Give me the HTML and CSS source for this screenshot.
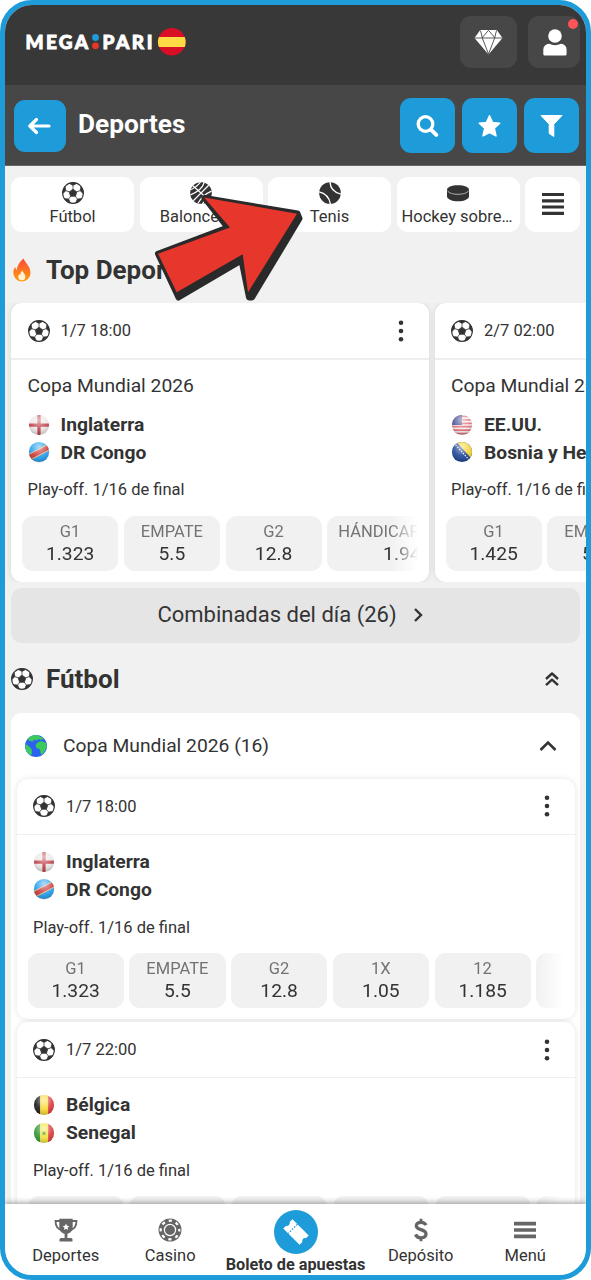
FILE: index.html
```html
<!DOCTYPE html>
<html lang="es">
<head>
<meta charset="utf-8">
<title>Deportes</title>
<link rel="stylesheet" href="styles.css">
</head>
<body>
<svg class="defs" width="0" height="0">
  <defs>
    <radialGradient id="gloss" cx=".5" cy=".25" r=".8"><stop offset="0" stop-color="#fff" stop-opacity=".65"/><stop offset=".55" stop-color="#fff" stop-opacity=".15"/><stop offset="1" stop-color="#000" stop-opacity=".25"/></radialGradient>
    <linearGradient id="fire" x1="0" y1="0" x2="0" y2="1"><stop offset="0" stop-color="#fb4a35"/><stop offset="1" stop-color="#ff9f0d"/></linearGradient>
    <clipPath id="disc"><circle cx="12" cy="12" r="11"/></clipPath>
  </defs>
  <symbol id="ball" viewBox="0 0 24 24">
    <circle cx="12" cy="12" r="11.3" fill="#fff" stroke="#333" stroke-width="1.2"/>
    <g fill="#333" stroke="#333" stroke-width=".8" stroke-linejoin="round">
      <path id="patch" d="M8 1.5 12 3.800 16 1.500Q12 .3 8 1.500zM12 4V8"/>
      <use href="#patch" transform="rotate(72 12 12)"/><use href="#patch" transform="rotate(144 12 12)"/>
      <use href="#patch" transform="rotate(216 12 12)"/><use href="#patch" transform="rotate(288 12 12)"/>
      <path d="M12 7.800 16.200 10.800 14.600 15.600H9.400L7.800 10.800z"/>
    </g>
  </symbol>
  <symbol id="dots" viewBox="0 0 6 24"><g fill="#333"><circle cx="3" cy="3.8" r="2.3"/><circle cx="3" cy="12" r="2.3"/><circle cx="3" cy="20.2" r="2.3"/></g></symbol>
  <symbol id="england" viewBox="0 0 24 24"><g clip-path="url(#disc)"><path fill="#ece6e6" d="M0 0h24v24H0z"/><path fill="#bd3a42" d="M10.200 0h3.600v24h-3.600zM0 10.300h24v3.600H0z"/></g><circle cx="12" cy="12" r="11" fill="url(#gloss)"/></symbol>
  <symbol id="congo" viewBox="0 0 24 24"><g clip-path="url(#disc)"><path fill="#1597ec" d="M0 0h24v24H0z"/><path stroke="#d8b58b" stroke-width="7.200" d="M-2 19.500 26 5"/><path stroke="#c72d2c" stroke-width="5" d="M-2 19.500 26 5"/></g><circle cx="12" cy="12" r="11.500" fill="url(#gloss)"/></symbol>
  <symbol id="usa" viewBox="0 0 24 24"><g clip-path="url(#disc)"><path fill="#f7e9e9" d="M0 0h24v24H0z"/><path stroke="#dc6570" stroke-width="1.900" d="M0 2.500h24M0 6.300h24M0 10.100h24M0 13.900h24M0 17.700h24M0 21.500h24"/><path fill="#414b92" d="M0 0h12v12H0z"/></g><circle cx="12" cy="12" r="11" fill="url(#gloss)"/></symbol>
  <symbol id="bosnia" viewBox="0 0 24 24"><g clip-path="url(#disc)"><path fill="#143c91" d="M0 0h24v24H0z"/><path fill="#f6cf22" d="M5 0h19v21z"/><path stroke="#fff" stroke-width="1.400" stroke-dasharray="1.500 1.500" d="m3 2 18 20"/></g><circle cx="12" cy="12" r="11" fill="url(#gloss)"/></symbol>
  <symbol id="belgium" viewBox="0 0 24 24"><g clip-path="url(#disc)"><path fill="#111" d="M0 0h8v24H0z"/><path fill="#fbd526" d="M8 0h8.500v24H8z"/><path fill="#d92f2b" d="M16.500 0H24v24h-7.500z"/></g><circle cx="12" cy="12" r="11" fill="url(#gloss)"/></symbol>
  <symbol id="senegal" viewBox="0 0 24 24"><g clip-path="url(#disc)"><path fill="#2a9426" d="M0 0h8v24H0z"/><path fill="#f4e130" d="M8 0h8.500v24H8z"/><path fill="#d92f2b" d="M16.500 0H24v24h-7.500z"/><path fill="#5a8f20" d="m12 9.500.8 1.700 1.900.2-1.400 1.300.4 1.900-1.700-.9-1.700.9.4-1.900-1.400-1.300 1.900-.2z"/></g><circle cx="12" cy="12" r="11" fill="url(#gloss)"/></symbol>
</svg>

<div class="app">
  <header class="brandbar">
    <svg class="logo" width="162" height="30" viewBox="0 0 162 30">
      <g class="logo-text"><text x="0.500" y="21.500" textLength="62.500">MEGA</text><text x="77.500" y="21.500" textLength="50">PARI</text></g>
      <circle cx="70.500" cy="10.500" r="3.400" fill="#1d9cd9"/><circle cx="70.500" cy="18.800" r="3.400" fill="#e6362c"/>
      <g transform="translate(133 1)"><circle cx="13.800" cy="13.800" r="13.800" fill="#d80e27"/><path fill="#ffda44" d="M.9 9A13.800 13.800 0 0 0 .9 19H26.700A13.800 13.800 0 0 0 26.700 9z"/></g>
    </svg>
    <div class="tile vip"><svg width="29" height="26" viewBox="0 0 29 26"><path fill="#fff" d="M6.200 1h16.600L28.500 9 14.500 25.500.5 9z"/><path fill="none" stroke="#474747" stroke-width=".9" d="M.5 9h28M14.500 1.300 8.200 8.700 14.500 25 20.800 8.700zM6.500 1.500 8.300 8.700M22.500 1.500 20.700 8.700"/></svg></div>
    <div class="tile user"><svg width="24" height="27" viewBox="0 0 24 27"><circle cx="12" cy="7" r="6.800" fill="#fff"/><path fill="#fff" d="M.3 25V20.500A5.700 5.700 0 0 1 6 14.800Q12 17.500 18 14.800A5.700 5.700 0 0 1 23.600 20.500V25a1.500 1.500 0 0 1-1.500 1.500H1.800A1.500 1.500 0 0 1 .3 25z"/></svg><i class="badge"></i></div>
  </header>

  <div class="titlebar">
    <div class="btn back"><svg width="24" height="18" viewBox="0 0 24 18"><path fill="none" stroke="#fff" stroke-width="3.200" stroke-linecap="round" stroke-linejoin="round" d="M8.500 2.500 1.800 9l6.700 6.500M2.500 9H21"/></svg></div>
    <h1>Deportes</h1>
    <div class="btn"><svg width="24" height="24" viewBox="0 0 24 24"><circle cx="9.500" cy="10" r="7.300" fill="none" stroke="#fff" stroke-width="3.300"/><path stroke="#fff" stroke-width="4" stroke-linecap="round" d="m15.300 15.800 5 5"/></svg></div>
    <div class="btn"><svg width="24" height="24" viewBox="0 0 24 24"><path fill="#fff" stroke="#fff" stroke-width="1.500" stroke-linejoin="round" d="m11.500 1.800 3 6.600 7.200.8-5.400 4.900 1.700 7.800-6.500-3.400L5 21.900l1.700-7.800L1.300 9.200l7.200-.8z"/></svg></div>
    <div class="btn"><svg width="24" height="24" viewBox="0 0 24 24"><path fill="#fff" stroke="#fff" stroke-width="1" stroke-linejoin="round" d="M1 1.500h21l-8.200 8.700v12.300l-4.600-3V10.200z"/></svg></div>
  </div>

  <main class="content">
    <nav class="sports">
      <div class="sport"><svg width="22" height="22"><use href="#ball"/></svg><span>Fútbol</span></div>
      <div class="sport"><svg width="22" height="22" viewBox="0 0 24 24"><circle cx="12" cy="12" r="11.800" fill="#333"/><path fill="none" stroke="#fff" stroke-width="1.300" d="M2.800 3.800 21.200 20.200M20.400 3.500 3.600 20.500M11.500 0Q7 6 .5 8.500M15.500.5Q13 9 .5 14M23.500 10Q14 14 8.500 23.500M23.500 15.500Q17 18 13.500 24"/></svg><span>Baloncesto</span></div>
      <div class="sport"><svg width="22" height="22" viewBox="0 0 24 24"><circle cx="12" cy="12" r="11.800" fill="#333"/><path fill="none" stroke="#fff" stroke-width="1.500" d="M12 0Q12.500 10.500 24 13.300M0 10.700Q10.500 13 12.500 24"/></svg><span>Tenis</span></div>
      <div class="sport"><svg width="22" height="22" viewBox="0 0 24 24"><path fill="#333" d="M0 8.500C0 5.500 5 3.500 12 3.500S24 5.500 24 8.500v7c0 3-5 5.500-12 5.500S0 18.500 0 15.500z"/><path fill="none" stroke="#ddd" stroke-width=".8" d="M.3 9.300C2 12 6 13.400 12 13.400S22 12 23.700 9.300"/></svg><span>Hockey sobre hielo</span></div>
      <div class="sport list"><svg width="22" height="24" viewBox="0 0 22 24"><path stroke="#333" stroke-width="3.200" d="M0 2.500h22M0 8.800h22M0 15h22M0 21.300h22"/></svg></div>
    </nav>

    <h2 class="top"><svg width="22" height="24" viewBox="0 0 22 24"><path fill="url(#fire)" d="M12.500.5C13.500 4 19.500 8 19.500 14.500A8.500 8.500 0 0 1 11 23.500 8.800 8.800 0 0 1 2.300 14.800C2.300 12.500 3 10.500 4.300 9c.2 1.600.7 2.600 1.600 3.100C6 7.500 9.500 3 12.500.5z"/><path fill="#fff3d6" d="M11.300 12.500c.7 2.200 3 3.600 3 6.300a3.500 3.500 0 0 1-7 0c0-1.300.4-2.200 1-2.900.2.700.5 1 1 1.200.1-1.800.8-3.500 2-4.600z"/></svg>Top Deportes</h2>

    <section class="carousel">
      <article class="card">
        <div class="card-head"><svg class="ball"><use href="#ball"/></svg><time>1/7 18:00</time><svg class="more"><use href="#dots"/></svg></div>
        <p class="league">Copa Mundial 2026</p>
        <div class="teams">
          <div><svg><use href="#england"/></svg>Inglaterra</div>
          <div><svg><use href="#congo"/></svg>DR Congo</div>
        </div>
        <p class="stage">Play-off. 1/16 de final</p>
        <div class="odds">
          <div class="odd"><span>G1</span><b>1.323</b></div><div class="odd"><span>EMPATE</span><b>5.5</b></div><div class="odd"><span>G2</span><b>12.8</b></div><div class="odd wide"><span>HÁNDICAP 1 (-1.5)</span><b>1.944</b></div>
        </div>
      </article>
      <article class="card">
        <div class="card-head"><svg class="ball"><use href="#ball"/></svg><time>2/7 02:00</time><svg class="more"><use href="#dots"/></svg></div>
        <p class="league">Copa Mundial 2026</p>
        <div class="teams">
          <div><svg><use href="#usa"/></svg>EE.UU.</div>
          <div><svg><use href="#bosnia"/></svg>Bosnia y Herzegovina</div>
        </div>
        <p class="stage">Play-off. 1/16 de final</p>
        <div class="odds">
          <div class="odd"><span>G1</span><b>1.425</b></div><div class="odd"><span>EMPATE</span><b>5.1</b></div>
        </div>
      </article>
    </section>

    <div class="combo">Combinadas del día (26)<svg width="10" height="16" viewBox="0 0 10 16"><path fill="none" stroke="#333" stroke-width="2.400" d="m2 2 6 6-6 6"/></svg></div>

    <h2 class="football"><svg width="22" height="22"><use href="#ball"/></svg>Fútbol<svg class="collapse" width="14" height="16" viewBox="0 0 14 16"><path fill="none" stroke="#333" stroke-width="2.400" stroke-linejoin="round" d="M1 8 7 2.500 13 8M1 14.200 7 8.700l6 5.500"/></svg></h2>

    <section class="group">
      <div class="group-head">
        <svg width="22" height="22" viewBox="0 0 22 22"><circle cx="11" cy="11" r="11" fill="#2b62ee"/><path fill="#3bcb5a" d="M2.800 3.800Q7-.3 12 .1L19 3.500 16 5 13.500 4 12 5.500 9 4.500 8 6.500 4.500 6zM.4 9 3 10.500 6.500 14 7 17.500 6 20.500Q-.5 17 .4 9zM12.500 7.500 16.500 6l4.500 2 .8 4-2.800 5.500-3 2.500-1-5.500-3.500-1.500-1-3z"/></svg>
        <span>Copa Mundial 2026 (16)</span>
        <svg width="18" height="12" viewBox="0 0 18 12"><path fill="none" stroke="#333" stroke-width="2.500" d="M1.500 10 9 2.500l7.500 7.500"/></svg>
      </div>
      <article class="card event">
        <div class="card-head"><svg class="ball"><use href="#ball"/></svg><time>1/7 18:00</time><svg class="more"><use href="#dots"/></svg></div>
        <div class="teams">
          <div><svg><use href="#england"/></svg>Inglaterra</div>
          <div><svg><use href="#congo"/></svg>DR Congo</div>
        </div>
        <p class="stage">Play-off. 1/16 de final</p>
        <div class="odds">
          <div class="odd"><span>G1</span><b>1.323</b></div><div class="odd"><span>EMPATE</span><b>5.5</b></div><div class="odd"><span>G2</span><b>12.8</b></div><div class="odd"><span>1X</span><b>1.05</b></div><div class="odd"><span>12</span><b>1.185</b></div><div class="odd"></div>
        </div>
      </article>
      <article class="card event">
        <div class="card-head"><svg class="ball"><use href="#ball"/></svg><time>1/7 22:00</time><svg class="more"><use href="#dots"/></svg></div>
        <div class="teams">
          <div><svg><use href="#belgium"/></svg>Bélgica</div>
          <div><svg><use href="#senegal"/></svg>Senegal</div>
        </div>
        <p class="stage">Play-off. 1/16 de final</p>
        <div class="odds">
          <div class="odd"></div><div class="odd"></div><div class="odd"></div><div class="odd"></div><div class="odd"></div><div class="odd"></div>
        </div>
      </article>
    </section>
  </main>

  <footer class="tabbar">
    <div class="tab"><svg width="24" height="24" viewBox="0 0 24 24"><path fill="none" stroke="#666" stroke-width="1.800" d="M6 3H1.500C1.500 8 3 11 8 12M18 3h4.500C22.500 8 21 11 16 12"/><path fill="#666" d="M5.300.8h13.400V9c0 4-2.400 6-5.300 6.800V20H17a1.500 1.500 0 0 1 1.500 1.500V23.500h-13V21.500A1.500 1.500 0 0 1 7 20h3.600v-4.200C7.700 15 5.300 13 5.300 9z"/><path fill="#fff" d="m12 5.500 1 2.200 2.400.3-1.800 1.600.5 2.400-2.100-1.200L9.900 12l.5-2.400L8.600 8l2.400-.3z"/></svg><span>Deportes</span></div>
    <div class="tab"><svg width="24" height="24" viewBox="0 0 24 24"><circle cx="12" cy="12" r="11.500" fill="#666"/><circle cx="12" cy="12" r="9.300" fill="none" stroke="#fff" stroke-width="2.200" stroke-dasharray="3.200 4.104" stroke-dashoffset="1.600"/><circle cx="12" cy="12" r="5.600" fill="none" stroke="#fff" stroke-width="1.200"/></svg><span>Casino</span></div>
    <div class="tab main-tab"><i><svg width="30" height="30" viewBox="0 0 30 30"><g transform="rotate(45 15 15)"><path fill="#fff" d="M3.500 8.500h23v4a2.700 2.700 0 0 0 0 5v4h-23v-4a2.700 2.700 0 0 0 0-5z"/><path stroke="#1d9cd9" stroke-width="1.200" stroke-dasharray="1.700 1.300" d="M10.500 8.500v13"/></g></svg></i><span>Boleto de apuestas</span></div>
    <div class="tab"><svg width="24" height="24" viewBox="0 0 24 24"><path fill="none" stroke="#666" stroke-width="3.300" d="M17 7.200Q15.700 4.300 12 4.300C8.900 4.300 7.300 5.800 7.300 7.800 7.300 12.700 17 10.600 17 16c0 2.400-2 3.800-5 3.800q-4.200 0-5.400-3.400"/><path stroke="#666" stroke-width="2.800" d="M12 .7v3.800M12 19.500v3.800"/></svg><span>Depósito</span></div>
    <div class="tab"><svg width="22" height="24" viewBox="0 0 22 24"><path stroke="#666" stroke-width="3.700" d="M0 5.700h22M0 12h22M0 18.300h22"/></svg><span>Menú</span></div>
  </footer>

  <svg class="pointer" width="160" height="120" viewBox="150 190 160 120"><path fill="#2a2a2a" stroke="#2a2a2a" stroke-width="6" stroke-linejoin="round" d="M204.500 198 297.500 213.500 299.500 218.500 252 297.500H249L241.500 260.500 178.500 297.500 158 253.700 227.500 227.500z"/><path fill="#e7372d" d="M204 197.500 297 213.700 248 292.300 242.700 254.300 176.700 292.300 158 253.700 230 227.500z"/></svg>
</div>
</body>
</html>
```

FILE: styles.css
```css
* { box-sizing: border-box; margin: 0; padding: 0; }
body { background: #fff; font-family: Roboto, "Liberation Sans", sans-serif; color: #333; }
svg { display: block; flex: none; }
.defs { position: absolute; }

.app {
  position: relative;
  display: flex;
  flex-direction: column;
  width: 591px;
  height: 1280px;
  border: 5px solid #1d9cd9;
  border-radius: 32px;
  background: #f1f1f1;
  overflow: hidden;
}

.brandbar { flex: none; display: flex; align-items: flex-start; height: 80px; padding: 11px 6px 0 20px; background: #383838; }
.logo { margin: 11px auto 0 0; }
.logo-text { font: 900 19px Lato, sans-serif; fill: #fff; stroke: #fff; stroke-width: .9; }
.tile { position: relative; display: flex; align-items: center; justify-content: center; height: 52px; border-radius: 11px; background: #474747; }
.vip { width: 57px; margin-right: 11px; }
.user { width: 52px; }
.user svg { margin-left: 1px; }
.badge { position: absolute; top: 2.500px; right: 2.500px; width: 10px; height: 10px; border-radius: 50%; background: #ff5558; }

.titlebar { flex: none; display: flex; align-items: center; gap: 7px; height: 81px; padding: 1px 7px 0 9px; background: #474747; border-bottom: 1px solid #6a6566; }
.titlebar h1 { flex: 1; padding-left: 5px; font-size: 26.200px; font-weight: 700; line-height: 30px; color: #fff; margin-top: -4px; }
.btn { display: flex; align-items: center; justify-content: center; width: 55px; height: 55px; border-radius: 11px; background: #1d9cd9; }
.back { width: 52px; height: 52px; }

.content { flex: 1; min-height: 0; overflow: hidden; padding: 11px 0 0 6px; }
.sports { display: flex; gap: 5.500px; padding-right: 6px; }
.sport { flex: 1; min-width: 0; height: 55px; padding: 5px 5px 0; border-radius: 11px; background: #fff; font-size: 16.500px; text-align: center; }
.sport svg { margin: 0 auto; }
.sport span { display: block; padding-top: 1px; line-height: 23px; overflow: hidden; text-overflow: ellipsis; white-space: nowrap; }
.sport.list { flex: 0 0 55px; padding-top: 15px; }

h2 { display: flex; align-items: center; font-size: 26px; font-weight: 700; line-height: 30px; }
h2.top { height: 71px; gap: 13px; padding-top: 4px; }
h2.football { height: 70.500px; gap: 13px; padding: 2px 27px 0 0; }
.collapse { margin-left: auto; }

.carousel { display: flex; gap: 5.500px; height: 279px; margin-left: -6px; padding-left: 6px; overflow: hidden; }
.card { flex: 0 0 418px; height: 279px; border-radius: 11px; background: #fff; box-shadow: 0 0 6px rgba(0, 0, 0, .11); overflow: hidden; }
.card-head { display: flex; align-items: center; height: 57px; padding: 0 25px 0 16.500px; border-bottom: 2px solid #eee; font-size: 16.500px; }
.ball { width: 22px; height: 22px; margin-right: 11px; }
.more { width: 6px; height: 24px; margin-left: auto; }
.league { margin: 12px 0 11.500px 16.500px; font-size: 19.250px; line-height: 27.500px; white-space: nowrap; }
.teams { padding-left: 16.500px; font-size: 19.250px; font-weight: 700; line-height: 27.500px; white-space: nowrap; }
.teams div { display: flex; align-items: center; height: 27.500px; gap: 11px; }
.teams svg { width: 22px; height: 22px; }
.stage { margin: 13px 0 15px 16.500px; font-size: 16.500px; line-height: 22px; white-space: nowrap; }
.odds { display: flex; gap: 5.500px; margin: 0 11px; overflow: hidden; -webkit-mask-image: linear-gradient(to left, transparent, #000 28px); mask-image: linear-gradient(to left, transparent, #000 28px); }
.odd { flex: 0 0 96.250px; height: 55px; padding-top: 5px; border-radius: 11px; background: #f1f1f1; text-align: center; }
.odd span { display: block; font-size: 16.500px; line-height: 21px; color: #737373; }
.odd b { display: block; font-size: 19.250px; line-height: 24px; font-weight: 400; }
.odd.wide { flex-basis: 160px; white-space: nowrap; }

.combo { display: flex; align-items: center; justify-content: center; gap: 16px; height: 55px; margin: 5.500px 6px 0 0; padding: 0 11px 1px 0; border-radius: 11px; background: #e5e5e5; font-size: 22px; }

.group { margin-right: 6px; padding: 0 5.500px; border-radius: 11px 11px 0 0; background: #fff; }
.group-head { display: flex; align-items: center; height: 65.500px; padding: 0 18px 0 8.500px; font-size: 19.250px; }
.group-head span { flex: 1; padding: 0 0 1px 16px; }
.event { height: 240.500px; margin-bottom: 2.750px; }
.event .card-head { height: 56.500px; border-bottom-width: 1.500px; margin-bottom: 13px; }
.event .stage { margin: 13.500px 0 14.500px 16.500px; }

.tabbar { position: relative; flex: none; display: grid; grid-template-columns: 104.500px 104.500px 146px 104.500px 104.500px; height: 71.500px; padding: 0 8.500px; background: #fff; box-shadow: 0 -1px 6px rgba(0, 0, 0, .4); font-size: 16.500px; line-height: 22px; text-align: center; }
.tab { padding-top: 14.500px; }
.tab svg { margin: 0 auto 3px; }
.main-tab { padding-top: 6.500px; font-size: 16.250px; font-weight: 700; white-space: nowrap; }
.main-tab i { display: flex; align-items: center; width: 44px; height: 44px; margin: 0 auto -.5px; border-radius: 50%; background: #1d9cd9; }
.main-tab svg { margin: 0 auto; }

.pointer { position: absolute; left: 145px; top: 185px; }
```
